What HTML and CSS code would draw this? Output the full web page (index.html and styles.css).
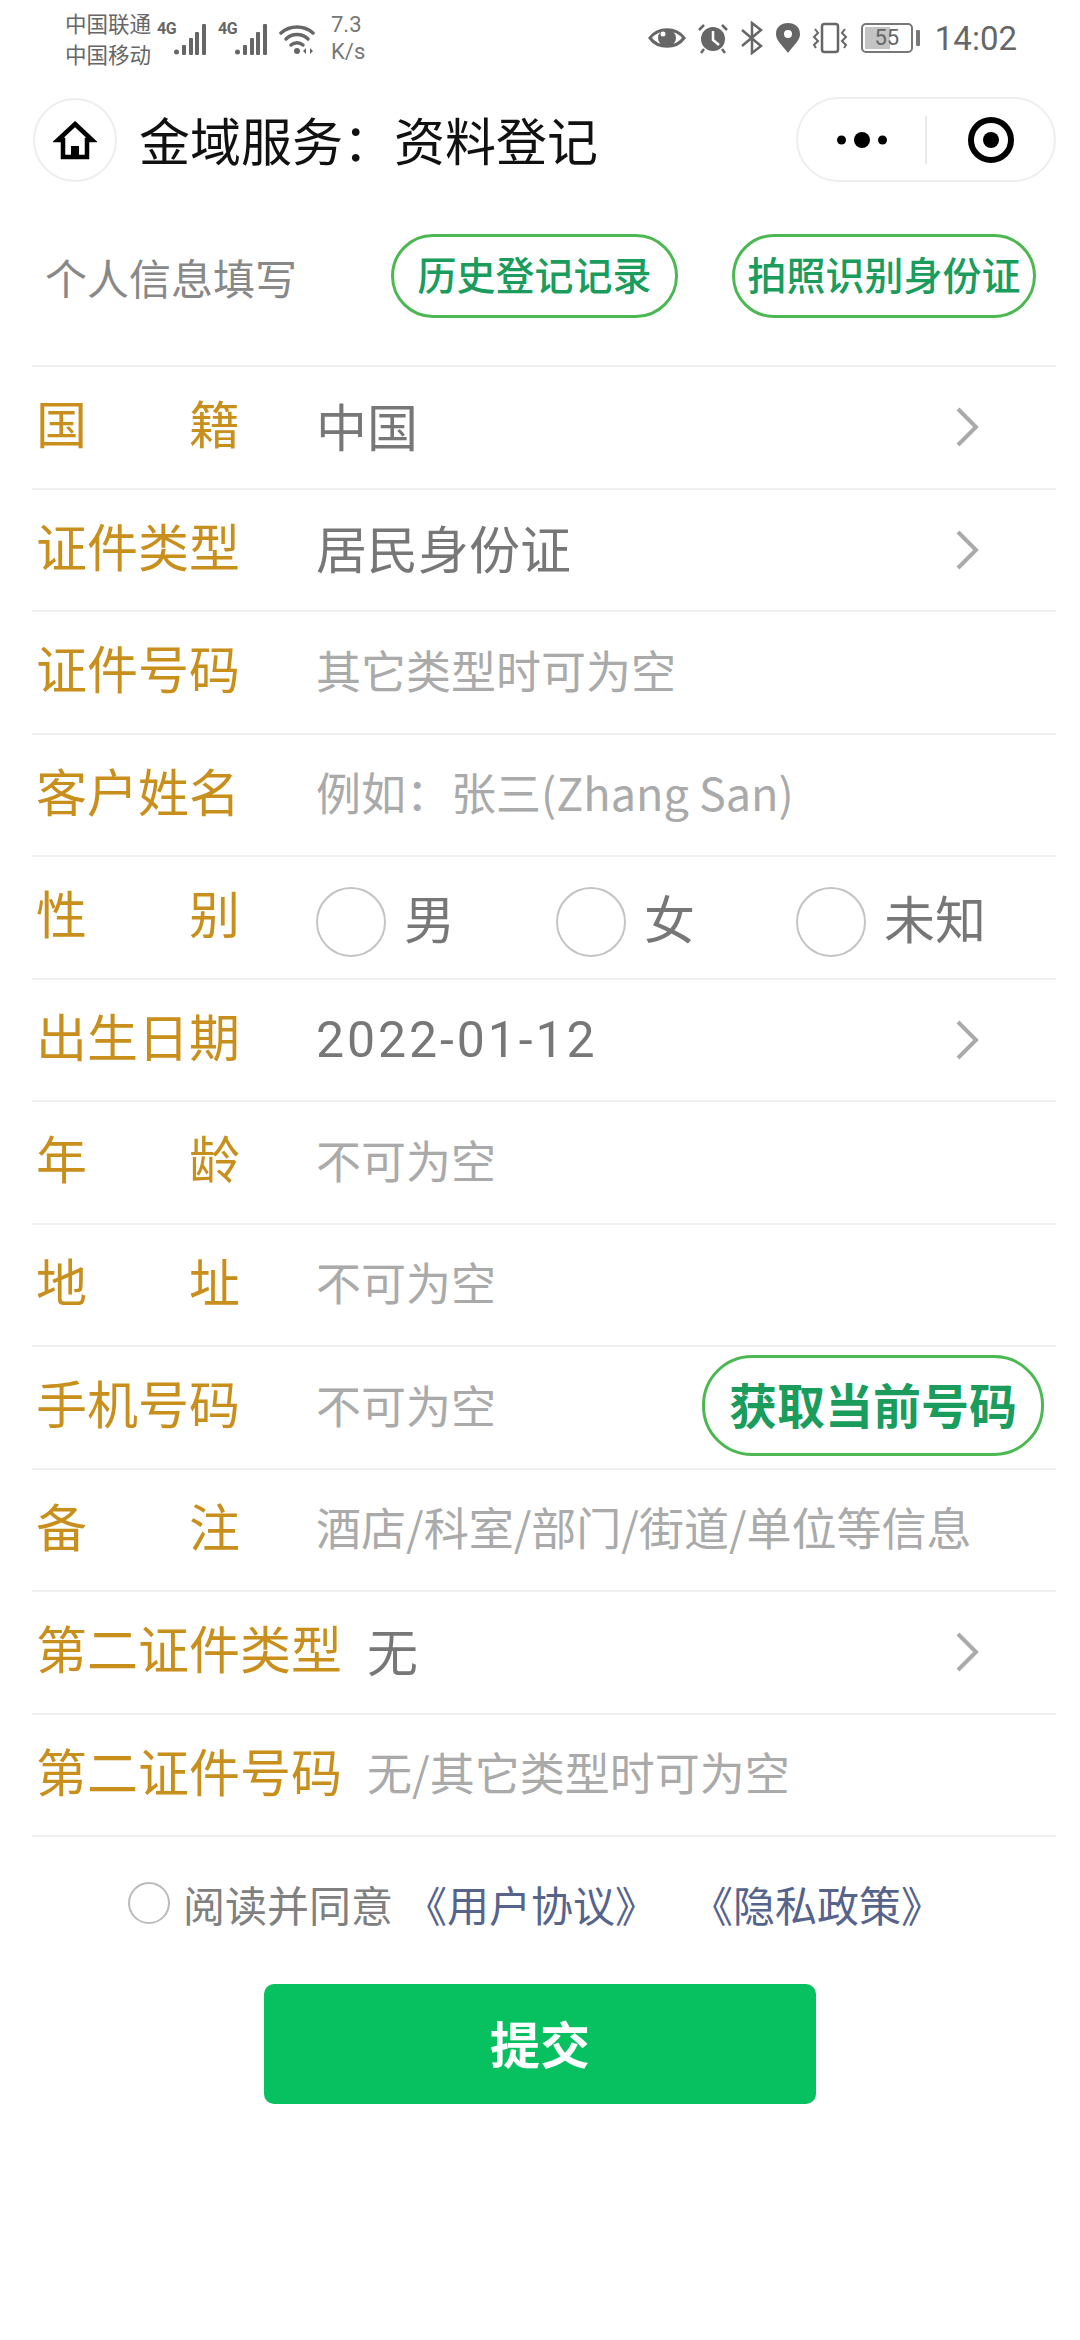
FILE: index.html
```html
<!DOCTYPE html>
<html lang="zh-CN">
<head>
<meta charset="utf-8">
<title>金域服务&#xFF1A;资料登记</title>
<link rel="stylesheet" href="styles.css">
</head>
<body>
<div class="status">
  <div class="status-left">
    <div class="carrier"><span>中国联通</span><span>中国移动</span></div>
    <span class="net">4G</span>
    <svg class="sig" width="32" height="32" viewBox="0 0 32 32"><g fill="#666"><circle cx="2.500" cy="28" r="2.500"/><rect x="8" y="21" width="4" height="10" rx="1"/><rect x="15" y="14" width="4" height="17" rx="1"/><rect x="21" y="8" width="4" height="23" rx="1"/><rect x="28" y="0" width="4" height="31" rx="1"/></g></svg>
    <span class="net net-second">4G</span>
    <svg class="sig" width="32" height="32" viewBox="0 0 32 32"><g fill="#666"><circle cx="2.500" cy="28" r="2.500"/><rect x="8" y="21" width="4" height="10" rx="1"/><rect x="15" y="14" width="4" height="17" rx="1"/><rect x="21" y="8" width="4" height="23" rx="1"/><rect x="28" y="0" width="4" height="31" rx="1"/></g></svg>
    <svg class="wifi" width="38" height="32" viewBox="0 0 38 32"><g fill="none" stroke="#666" stroke-width="3.500" stroke-linecap="round"><path d="M2 9C11 1 25 1 34 9"/><path d="M7 15C13 9 23 9 29 15"/><path d="M12 21C15.500 18 20.500 18 24 21"/></g><circle cx="18" cy="27" r="3" fill="#666"/><path d="M27 24L24 27L27 30ZM31 24L34 27L31 30Z" fill="#666"/></svg>
    <div class="speed"><span>7.3</span><span>K/s</span></div>
  </div>
  <div class="status-right">
    <svg width="38" height="28" viewBox="0 0 38 28"><path d="M2 14C10 3 28 3 36 14C28 25 10 25 2 14Z" fill="none" stroke="#666" stroke-width="3"/><circle cx="19" cy="14" r="9" fill="#666"/><circle cx="15" cy="10" r="2.500" fill="#fff"/></svg>
    <svg width="32" height="32" viewBox="0 0 32 32"><circle cx="16" cy="17" r="12" fill="#666"/><path d="M16 9V18L22 23" fill="none" stroke="#fff" stroke-width="2.500"/><path d="M2 8L7 3M30 8L25 3M7 27L4 31M25 27L28 31" stroke="#666" stroke-width="2.500"/></svg>
    <svg width="24" height="34" viewBox="0 0 24 34"><path d="M2 9L21 25L12 32V2L21 9L2 25" fill="none" stroke="#666" stroke-width="2.500"/></svg>
    <svg width="26" height="32" viewBox="0 0 26 32"><path d="M13 31C6 22 1 18 1 12C1 5 6 1 13 1C20 1 25 5 25 12C25 18 20 22 13 31Z" fill="#666"/><circle cx="13" cy="12" r="4" fill="#fff"/></svg>
    <svg width="36" height="32" viewBox="0 0 36 32"><rect x="10" y="2" width="16" height="28" rx="2.500" fill="none" stroke="#666" stroke-width="2.500"/><path d="M3 7L6 11L2 15L6 19L2 23L4 26M33 7L30 11L34 15L30 19L34 23L32 26" fill="none" stroke="#666" stroke-width="2"/></svg>
    <div class="battery-wrap"><div class="battery"><span class="battery-fill"></span><span class="battery-num">55</span></div><span class="battery-nub"></span></div>
    <span class="time">14:02</span>
  </div>
</div>

<header class="nav">
  <div class="home">
    <svg width="44" height="40" viewBox="0 0 44 40"><path d="M22 4L39 20H34V37H10V20H5Z" fill="none" stroke="#000" stroke-width="4.500" stroke-linejoin="miter"/><rect x="18" y="26" width="8" height="11" fill="#000"/></svg>
  </div>
  <h1 class="title">金域服务&#xFF1A;资料登记</h1>
  <div class="capsule">
    <div class="capsule-part">
      <svg width="50" height="18" viewBox="0 0 50 18"><circle cx="4.500" cy="9" r="4.500" fill="#000"/><circle cx="25" cy="9" r="8" fill="#000"/><circle cx="45.500" cy="9" r="4.500" fill="#000"/></svg>
    </div>
    <span class="capsule-sep"></span>
    <div class="capsule-part">
      <svg width="48" height="48" viewBox="0 0 48 48"><circle cx="24" cy="24" r="20" fill="none" stroke="#000" stroke-width="6"/><circle cx="24" cy="24" r="8" fill="#000"/></svg>
    </div>
  </div>
</header>

<section class="head">
  <span class="head-title">个人信息填写</span>
  <button class="pill pill-history">历史登记记录</button>
  <button class="pill pill-photo">拍照识别身份证</button>
</section>

<main class="form">
  <div class="row"><span class="label">国籍</span><span class="value">中国</span><svg class="chev" width="24" height="42" viewBox="0 0 24 42"><path d="M3 3L21 21L3 39" fill="none" stroke="#aaa" stroke-width="4"/></svg></div>
  <div class="row"><span class="label">证件类型</span><span class="value">居民身份证</span><svg class="chev" width="24" height="42" viewBox="0 0 24 42"><path d="M3 3L21 21L3 39" fill="none" stroke="#aaa" stroke-width="4"/></svg></div>
  <div class="row"><span class="label">证件号码</span><span class="hint">其它类型时可为空</span></div>
  <div class="row"><span class="label">客户姓名</span><span class="hint">例如&#xFF1A;张三(Zhang San)</span></div>
  <div class="row"><span class="label">性别</span>
    <div class="radios">
      <span class="radio"><i class="dot"></i><span class="value value-flat">男</span></span>
      <span class="radio"><i class="dot"></i><span class="value value-flat">女</span></span>
      <span class="radio"><i class="dot"></i><span class="value value-flat">未知</span></span>
    </div>
  </div>
  <div class="row"><span class="label">出生日期</span><span class="value value-flat date">2022-01-12</span><svg class="chev" width="24" height="42" viewBox="0 0 24 42"><path d="M3 3L21 21L3 39" fill="none" stroke="#aaa" stroke-width="4"/></svg></div>
  <div class="row"><span class="label">年龄</span><span class="hint">不可为空</span></div>
  <div class="row"><span class="label">地址</span><span class="hint">不可为空</span></div>
  <div class="row"><span class="label">手机号码</span><span class="hint">不可为空</span><button class="pill pill-phone">获取当前号码</button></div>
  <div class="row"><span class="label">备注</span><span class="hint">酒店/科室/部门/街道/单位等信息</span></div>
  <div class="row"><span class="label label-wide">第二证件类型</span><span class="value">无</span><svg class="chev" width="24" height="42" viewBox="0 0 24 42"><path d="M3 3L21 21L3 39" fill="none" stroke="#aaa" stroke-width="4"/></svg></div>
  <div class="row"><span class="label label-wide">第二证件号码</span><span class="hint">无/其它类型时可为空</span></div>
</main>

<div class="agree">
  <i class="agree-dot"></i>
  <span class="agree-text">阅读并同意</span>
  <a class="link link-first">《用户协议》</a>
  <a class="link link-second">《隐私政策》</a>
</div>
<div class="submit-wrap"><button class="submit">提交</button></div>
</body>
</html>
```

FILE: styles.css
```css
* { box-sizing: border-box; }
html, body { margin: 0; padding: 0; background: #fff; }
body {
  width: 1080px;
  height: 2340px;
  overflow: hidden;
  font-family: "Noto Sans CJK SC", "Noto Sans", sans-serif;
}
button { font-family: inherit; background: none; padding: 0; cursor: pointer; }

.status {
  height: 76px;
  padding: 0 63px 0 65px;
  display: flex;
  justify-content: space-between;
  align-items: center;
  color: #666;
}
.status-left, .status-right { display: flex; align-items: center; }
.carrier { display: flex; flex-direction: column; font-size: 21.500px; line-height: 31px; width: 92px; }
.net { font-family: "Roboto", sans-serif; font-size: 16px; font-weight: 700; width: 17px; align-self: flex-start; margin-top: 12px; letter-spacing: -0.500px; }
.net-second { margin-left: 12px; }
.sig { margin-top: 4px; }
.wifi { margin: 4px 0 0 12px; }
.speed {
  display: flex;
  flex-direction: column;
  font-family: "Roboto", sans-serif;
  font-size: 22px;
  line-height: 27px;
  margin-left: 14px;
  color: #777;
}
.status-right { gap: 11px; }
.battery-wrap { display: flex; align-items: center; gap: 3px; margin-left: 2px; }
.battery {
  position: relative;
  width: 52px;
  height: 30px;
  border: 2.500px solid #777;
  border-radius: 5px;
  display: flex;
  align-items: center;
  justify-content: center;
}
.battery-fill { position: absolute; left: 2px; top: 2px; bottom: 2px; width: 25px; background: #c4c4c4; }
.battery-num { position: relative; font-family: "Roboto", sans-serif; font-size: 22px; line-height: 1; color: #666; }
.battery-nub { width: 4px; height: 16px; background: #777; border-radius: 1px; }
.time { font-family: "Roboto", sans-serif; font-size: 33px; color: #666; margin-left: 4px; }

.nav {
  margin-top: 21px;
  height: 85px;
  padding: 0 24px 0 33px;
  display: flex;
  align-items: center;
}
.home {
  width: 84px;
  height: 84px;
  border: 2px solid #eee;
  border-radius: 50%;
  display: flex;
  align-items: center;
  justify-content: center;
  flex: none;
}
.title { margin: 0 0 0 22px; flex: 1; font-size: 51px; font-weight: 400; color: #111; line-height: 1.2; }
.capsule {
  width: 260px;
  height: 85px;
  border: 2px solid #eee;
  border-radius: 43px;
  display: flex;
  align-items: center;
}
.capsule-part { flex: 1; display: flex; justify-content: center; align-items: center; }
.capsule-sep { width: 2px; height: 48px; background: #eaeaea; }

.head {
  margin-top: 52px;
  height: 84px;
  padding-left: 45px;
  display: flex;
  align-items: center;
}
.head-title { font-size: 42px; color: #888; width: 346px; }
.pill {
  border: 3px solid #4cb851;
  border-radius: 50px;
  color: #1a9c5c;
  height: 84px;
  padding-bottom: 6px;
  display: flex;
  align-items: center;
  justify-content: center;
  font-weight: 500;
  flex: none;
}
.pill-history { width: 287px; font-size: 39px; }
.pill-photo { width: 304px; margin-left: 54px; font-size: 39px; }
.pill-phone {
  width: 342px;
  height: 101px;
  padding-bottom: 4px;
  margin-bottom: 4px;
  font-size: 48px;
  font-weight: 700;
  margin-left: auto;
  margin-right: 12px;
}

.form { margin: 47px 24px 0 32px; border-top: 2px solid #f0f0f0; }
.row {
  height: 122.500px;
  padding-left: 4px;
  border-bottom: 2px solid #f0f0f0;
  display: flex;
  align-items: center;
}
.label {
  width: 204px;
  margin-right: 76px;
  padding-bottom: 10px;
  flex: none;
  font-size: 51px;
  line-height: 60px;
  color: #c98f1c;
  text-align: justify;
  text-align-last: justify;
}
.label-wide { width: 306px; margin-right: 25px; }
.value { font-size: 51px; line-height: 60px; color: #777; padding-bottom: 5px; }
.value-flat { padding-bottom: 0; }
.date { font-family: "Roboto", sans-serif; font-size: 50px; letter-spacing: 2.900px; }
.hint { font-size: 45px; line-height: 60px; color: #aaa; padding-bottom: 5px; }
.chev { margin-left: auto; margin-right: 77px; flex: none; }
.radios { display: flex; }
.radio { display: flex; align-items: center; gap: 18px; }
.radio:nth-child(1) { width: 240px; }
.radio:nth-child(2) { width: 240px; }
.dot {
  width: 70px;
  height: 70px;
  margin-top: 9px;
  border: 2px solid #c4c4c4;
  border-radius: 50%;
  flex: none;
}

.agree {
  margin-top: 24px;
  height: 84px;
  padding-left: 128px;
  display: flex;
  align-items: center;
  font-size: 42px;
}
.agree-dot {
  width: 42px;
  height: 42px;
  border: 2px solid #bbb;
  border-radius: 50%;
  margin-right: 13px;
  flex: none;
}
.agree-text { color: #808080; }
.link { color: #56648c; }
.link-first { margin-left: 12px; }
.link-second { margin-left: 34px; }

.submit-wrap { margin-top: 39px; display: flex; padding-left: 264px; }
.submit {
  width: 552px;
  height: 120px;
  padding-bottom: 4px;
  border: none;
  border-radius: 10px;
  background: #07c160;
  color: #fff;
  font-size: 50px;
  font-weight: 700;
}
```
